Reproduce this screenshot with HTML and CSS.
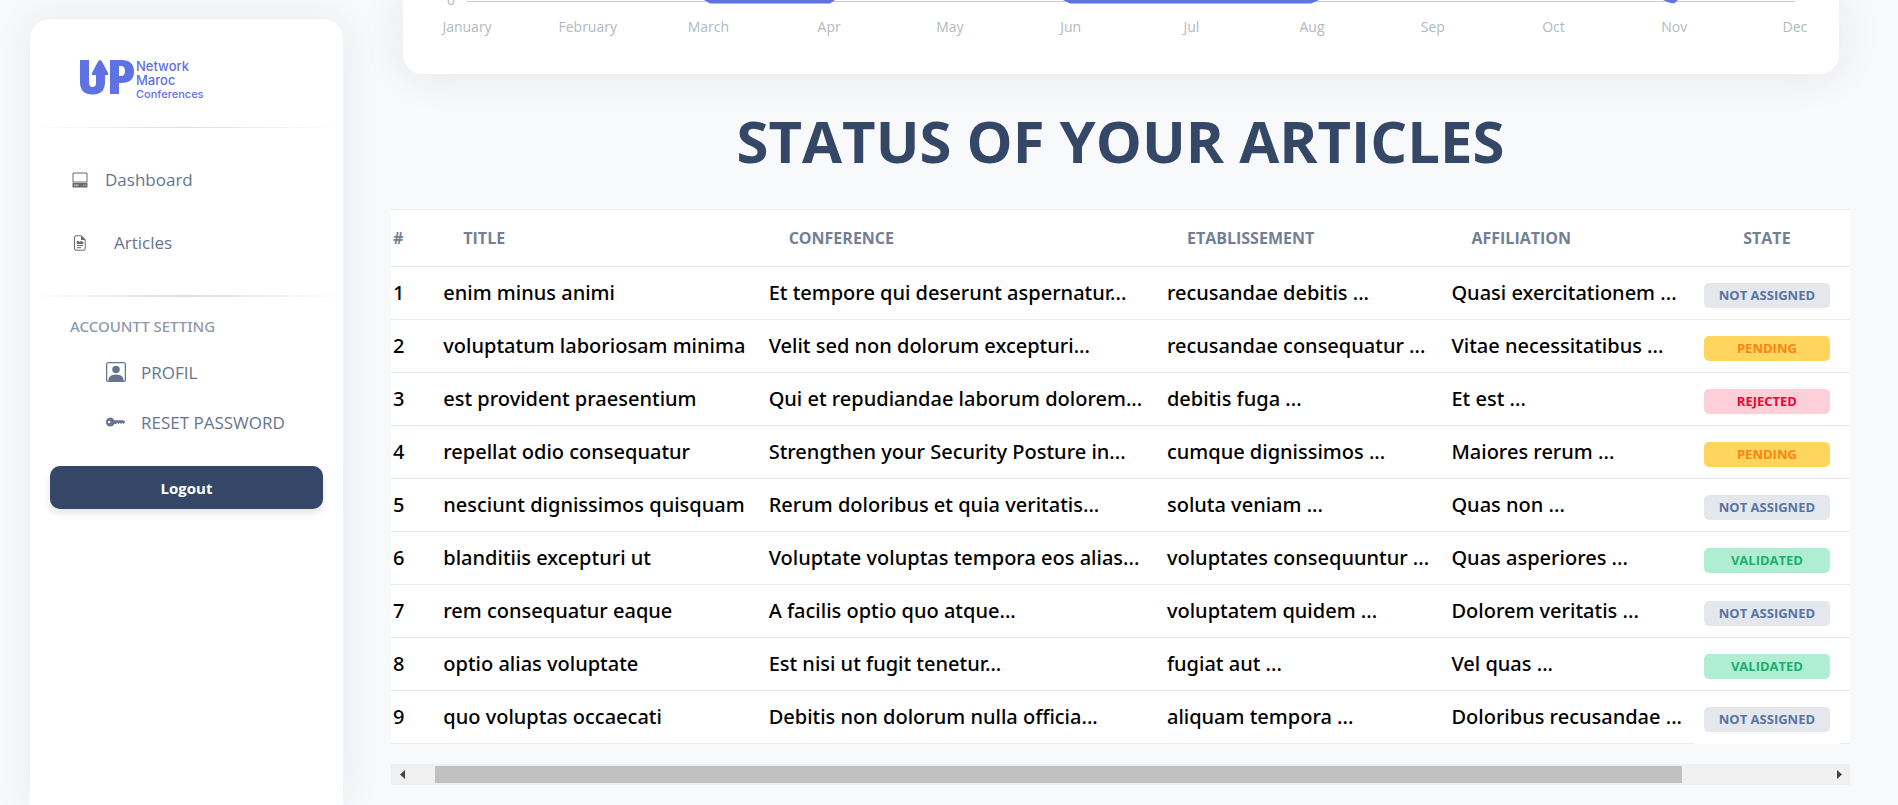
FILE: index.html
```html
<!DOCTYPE html>
<html lang="en">
<head>
<meta charset="utf-8">
<title>Status of your articles</title>
<link rel="stylesheet" href="styles.css">
</head>
<body>
<div class="page">
  <aside class="sidebar">
    <a class="brand" href="#">
      <svg class="brand-mark" viewBox="0 0 54 36" aria-hidden="true">
        <path d="M0 1H9V23Q9 28 12.500 28Q16 28 16 24V16H12Q11.500 14.500 12.500 13L18 2.500Q20 -.5 22 2.500L27.500 13Q28.500 14.500 28 16H25V23Q25 35.500 12.500 35.500Q0 35.500 0 23Z"/>
        <path fill-rule="evenodd" d="M30 1H41Q54 1 54 12.500Q54 24 41 24H39V35H30ZM39 7V17H41Q45 17 45 12Q45 7 41 7Z"/>
      </svg>
      <span class="brand-text"><span>Network</span><span>Maroc</span><span class="brand-small">Conferences</span></span>
    </a>
    <hr class="rule">
    <nav class="menu">
      <a class="menu-link" href="#">
        <svg class="menu-icon" viewBox="0 0 16 16" aria-hidden="true"><path fill-rule="evenodd" d="M1.500 0.500H14.500Q15.500 .5 15.500 1.500V10.500H.5V1.500Q.5 .5 1.500 .5ZM1.500 1.500V9.500H14.500V1.500ZM.5 11H15.500V15.500H.5ZM2 12.700V13.500H6.500V12.700ZM11 12.700V13.500H12V12.700ZM13 12.700V13.500H14V12.700Z"/></svg>
        Dashboard
      </a>
      <a class="menu-link menu-link-wide" href="#">
        <svg class="menu-icon" viewBox="0 0 16 16" aria-hidden="true"><path fill="none" stroke="currentColor" d="M4 .8H9.500L13.200 4.500V14Q13.200 15.200 12 15.200H4Q2.500 15.200 2.500 14V2Q2.500 .8 4 .8ZM5 10.500H11M5 12.700H9"/><path d="M9 .5L13.500 5H9ZM4.800 9V6.500L6 5.500L7.500 7L9 6L11.300 7V9Z"/></svg>
        Articles
      </a>
    </nav>
    <hr class="rule rule-thick">
    <h2 class="menu-title">ACCOUNTT SETTING</h2>
    <nav class="account">
      <a class="account-link" href="#">
        <svg class="account-icon" viewBox="0 0 16 16" aria-hidden="true"><path d="M11 6a3 3 0 1 1-6 0 3 3 0 0 1 6 0z"/><path d="M2 0a2 2 0 0 0-2 2v12a2 2 0 0 0 2 2h12a2 2 0 0 0 2-2V2a2 2 0 0 0-2-2H2zm12 1a1 1 0 0 1 1 1v12a1 1 0 0 1-1 1v-1c0-1-1-4-6-4s-6 3-6 4v1a1 1 0 0 1-1-1V2a1 1 0 0 1 1-1h12z"/></svg>
        PROFIL
      </a>
      <a class="account-link" href="#">
        <svg class="account-icon" viewBox="0 0 16 16" aria-hidden="true"><path d="M3.500 11.500a3.500 3.500 0 1 1 3.163-5H14L15.500 8 14 9.500l-1-1-1 1-1-1-1 1-1-1-1 1H6.663a3.500 3.500 0 0 1-3.163 2zM2.500 9a1 1 0 1 0 0-2 1 1 0 0 0 0 2z"/></svg>
        RESET PASSWORD
      </a>
    </nav>
    <button class="logout" type="button">Logout</button>
  </aside>

  <main class="main">
    <section class="chart-card">
      <div class="plot">
        <svg class="plot-lines" viewBox="0 0 1328 5" preserveAspectRatio="none" aria-hidden="true">
          <path class="axis" d="M0 1.500H1328"/>
          <path class="series" d="M237 0H368L363 3.500H243ZM596 0H852L844 3.500H603ZM1196 0H1211L1207 3.500L1202 2.500Z"/>
        </svg>
        <div class="months">
          <span>January</span><span>February</span><span>March</span><span>Apr</span><span>May</span><span>Jun</span><span>Jul</span><span>Aug</span><span>Sep</span><span>Oct</span><span>Nov</span><span>Dec</span>
        </div>
        <span class="tick">0</span>
      </div>
    </section>

    <h1 class="title">STATUS OF YOUR ARTICLES</h1>

    <table class="articles">
      <colgroup><col class="c-num"><col class="c-title"><col class="c-conf"><col class="c-etab"><col class="c-aff"><col class="c-state"></colgroup>
      <thead>
        <tr><th>#</th><th>TITLE</th><th>CONFERENCE</th><th>ETABLISSEMENT</th><th>AFFILIATION</th><th>STATE</th></tr>
      </thead>
      <tbody>
        <tr><td>1</td><td>enim minus animi</td><td>Et tempore qui deserunt aspernatur...</td><td>recusandae debitis ...</td><td>Quasi exercitationem ...</td><td><span class="badge idle">NOT ASSIGNED</span></td></tr>
        <tr><td>2</td><td>voluptatum laboriosam minima</td><td>Velit sed non dolorum excepturi...</td><td>recusandae consequatur ...</td><td>Vitae necessitatibus ...</td><td><span class="badge pending">PENDING</span></td></tr>
        <tr><td>3</td><td>est provident praesentium</td><td>Qui et repudiandae laborum dolorem...</td><td>debitis fuga ...</td><td>Et est ...</td><td><span class="badge rejected">REJECTED</span></td></tr>
        <tr><td>4</td><td>repellat odio consequatur</td><td>Strengthen your Security Posture in...</td><td>cumque dignissimos ...</td><td>Maiores rerum ...</td><td><span class="badge pending">PENDING</span></td></tr>
        <tr><td>5</td><td>nesciunt dignissimos quisquam</td><td>Rerum doloribus et quia veritatis...</td><td>soluta veniam ...</td><td>Quas non ...</td><td><span class="badge idle">NOT ASSIGNED</span></td></tr>
        <tr><td>6</td><td>blanditiis excepturi ut</td><td>Voluptate voluptas tempora eos alias...</td><td>voluptates consequuntur ...</td><td>Quas asperiores ...</td><td><span class="badge validated">VALIDATED</span></td></tr>
        <tr><td>7</td><td>rem consequatur eaque</td><td>A facilis optio quo atque...</td><td>voluptatem quidem ...</td><td>Dolorem veritatis ...</td><td><span class="badge idle">NOT ASSIGNED</span></td></tr>
        <tr><td>8</td><td>optio alias voluptate</td><td>Est nisi ut fugit tenetur...</td><td>fugiat aut ...</td><td>Vel quas ...</td><td><span class="badge validated">VALIDATED</span></td></tr>
        <tr><td>9</td><td>quo voluptas occaecati</td><td>Debitis non dolorum nulla officia...</td><td>aliquam tempora ...</td><td>Doloribus recusandae ...</td><td><span class="badge idle">NOT ASSIGNED</span></td></tr>
      </tbody>
    </table>

    <div class="scrollbar">
      <button class="scroll-btn" type="button" aria-label="Scroll left"><svg viewBox="0 0 5 9" aria-hidden="true"><path d="M5 0V9L0 4.500Z"/></svg></button>
      <div class="scroll-track"><div class="scroll-thumb"></div></div>
      <button class="scroll-btn" type="button" aria-label="Scroll right"><svg viewBox="0 0 5 9" aria-hidden="true"><path d="M0 0V9L5 4.500Z"/></svg></button>
    </div>
  </main>
</div>
</body>
</html>
```
FILE: styles.css
```css
* { box-sizing: border-box; }
body {
  margin: 0;
  background: #f8f9fb;
  color: #67748e;
  font-family: "Open Sans", "Noto Sans", sans-serif;
}
.page {
  display: flex;
  gap: 48px;
  height: 100vh;
  padding: 0 48px 0 30px;
  overflow: hidden;
}
a { color: inherit; text-decoration: none; }
svg { display: block; fill: currentColor; }

.sidebar {
  flex: none;
  width: 313px;
  margin-top: 19px;
  background: #fff;
  border-radius: 20px 20px 0 0;
  box-shadow: 0 0 40px rgba(33, 45, 60, .08);
}
.brand {
  display: flex;
  gap: 2px;
  height: 108px;
  padding: 40px 50px 0;
  color: #5e72e4;
}
.brand-mark { width: 54px; height: 36px; }
.brand-text {
  display: flex;
  flex-direction: column;
  font: 500 13px/14px Inter, sans-serif;
}
.brand-small { font-size: 11px; }
.rule {
  height: 1px;
  margin: 0;
  border: 0;
  background: linear-gradient(90deg, transparent, #dedfe0, transparent);
}
.rule-thick { height: 2px; }
.menu { padding: 20px 42px 21px; }
.menu-link {
  display: flex;
  align-items: center;
  gap: 17px;
  height: 63px;
  font-size: 17px;
}
.menu-link-wide { gap: 26px; }
.menu-icon { width: 16px; height: 16px; color: #6b6b6b; }
.menu-title {
  margin: 17px 40px 9px;
  font-family: "Noto Sans", sans-serif;
  font-size: 15px;
  line-height: 24px;
  font-weight: 500;
  color: #8e98aa;
}
.account { padding-left: 76px; }
.account-link {
  display: flex;
  align-items: center;
  gap: 15px;
  height: 50px;
  font-size: 17px;
}
.account-icon { width: 20px; height: 20px; }
.logout {
  display: block;
  width: calc(100% - 40px);
  height: 43px;
  margin: 19px 20px 0;
  border: 0;
  border-radius: 10px;
  background: #344767;
  color: #fff;
  font: 700 15px/24px "Open Sans", sans-serif;
  box-shadow: 0 4px 7px rgba(0, 0, 0, .11);
}

.main { flex: 1; min-width: 0; }
.chart-card {
  height: 74px;
  margin: 0 11px 0 12px;
  padding: 0 44px 0 64px;
  background: #fff;
  border-radius: 0 0 20px 20px;
  box-shadow: 0 0 45px rgba(33, 37, 41, .09);
}
.plot { position: relative; font-size: 14px; line-height: 20px; color: #b2b9bf; }
.plot-lines { width: 100%; height: 5px; }
.axis { fill: none; stroke: #c8cacc; }
.series { fill: #5e72e4; }
.tick { position: absolute; right: 100%; top: -10px; padding-right: 12px; }
.months { display: flex; justify-content: space-between; padding-top: 12px; }
.months span { display: flex; justify-content: center; width: 0; }

.title {
  margin: 26px 0 27px;
  font-size: 58px;
  line-height: 82px;
  font-weight: 700;
  text-align: center;
  color: #344767;
}

.articles {
  width: 100%;
  table-layout: fixed;
  border-collapse: separate;
  border-spacing: 0;
  background: #fff;
}
.c-num { width: 2.900%; }
.c-title { width: 22.300%; }
.c-conf { width: 27.300%; }
.c-etab { width: 19.500%; }
.c-aff { width: 17.300%; }
.articles th {
  height: 58px;
  padding: 0 30px;
  border-top: 1px solid #e9ecef;
  border-bottom: 1px solid #e9ecef;
  font-size: 16px;
  line-height: 24px;
  font-weight: 700;
  text-align: left;
  color: #737f94;
}
.articles td {
  height: 53px;
  padding: 0 10px;
  border-bottom: 1px solid #e9ecef;
  font-family: "Noto Sans", sans-serif;
  font-size: 20px;
  line-height: 30px;
  font-weight: 500;
  white-space: nowrap;
  color: #000;
}
.articles th:first-child, .articles td:first-child { padding: 0 2px; }
.articles th:last-child { padding: 0 20px 0 10px; text-align: center; }
.articles td:last-child { padding: 4px 20px 0 10px; }
.articles tr:last-child td:last-child {
  border-bottom: 0;
  background: linear-gradient(#e9ecef, #e9ecef) right bottom / 10px 1px no-repeat;
}
.badge {
  display: block;
  height: 25px;
  border-radius: 5px;
  font-family: "Open Sans", sans-serif;
  font-size: 13px;
  line-height: 25px;
  font-weight: 700;
  text-align: center;
}
.idle { background: #e4e8ed; color: #5974a2; }
.pending { background: #ffd55d; color: #ff8413; }
.rejected { background: #fccfd9; color: #f80031; }
.validated { background: #b0eed3; color: #1aae6f; }

.scrollbar {
  display: flex;
  height: 21px;
  margin-top: 20px;
  background: #f0f0f0;
}
.scroll-btn {
  display: flex;
  align-items: center;
  justify-content: center;
  width: 22px;
  padding: 0;
  border: 0;
  background: transparent;
  color: #444;
}
.scroll-btn svg { width: 5px; height: 9px; }
.scroll-track { flex: 1; padding: 2px 0 2px 22px; }
.scroll-thumb { width: 89.500%; height: 100%; background: #c0c0c0; }
```
